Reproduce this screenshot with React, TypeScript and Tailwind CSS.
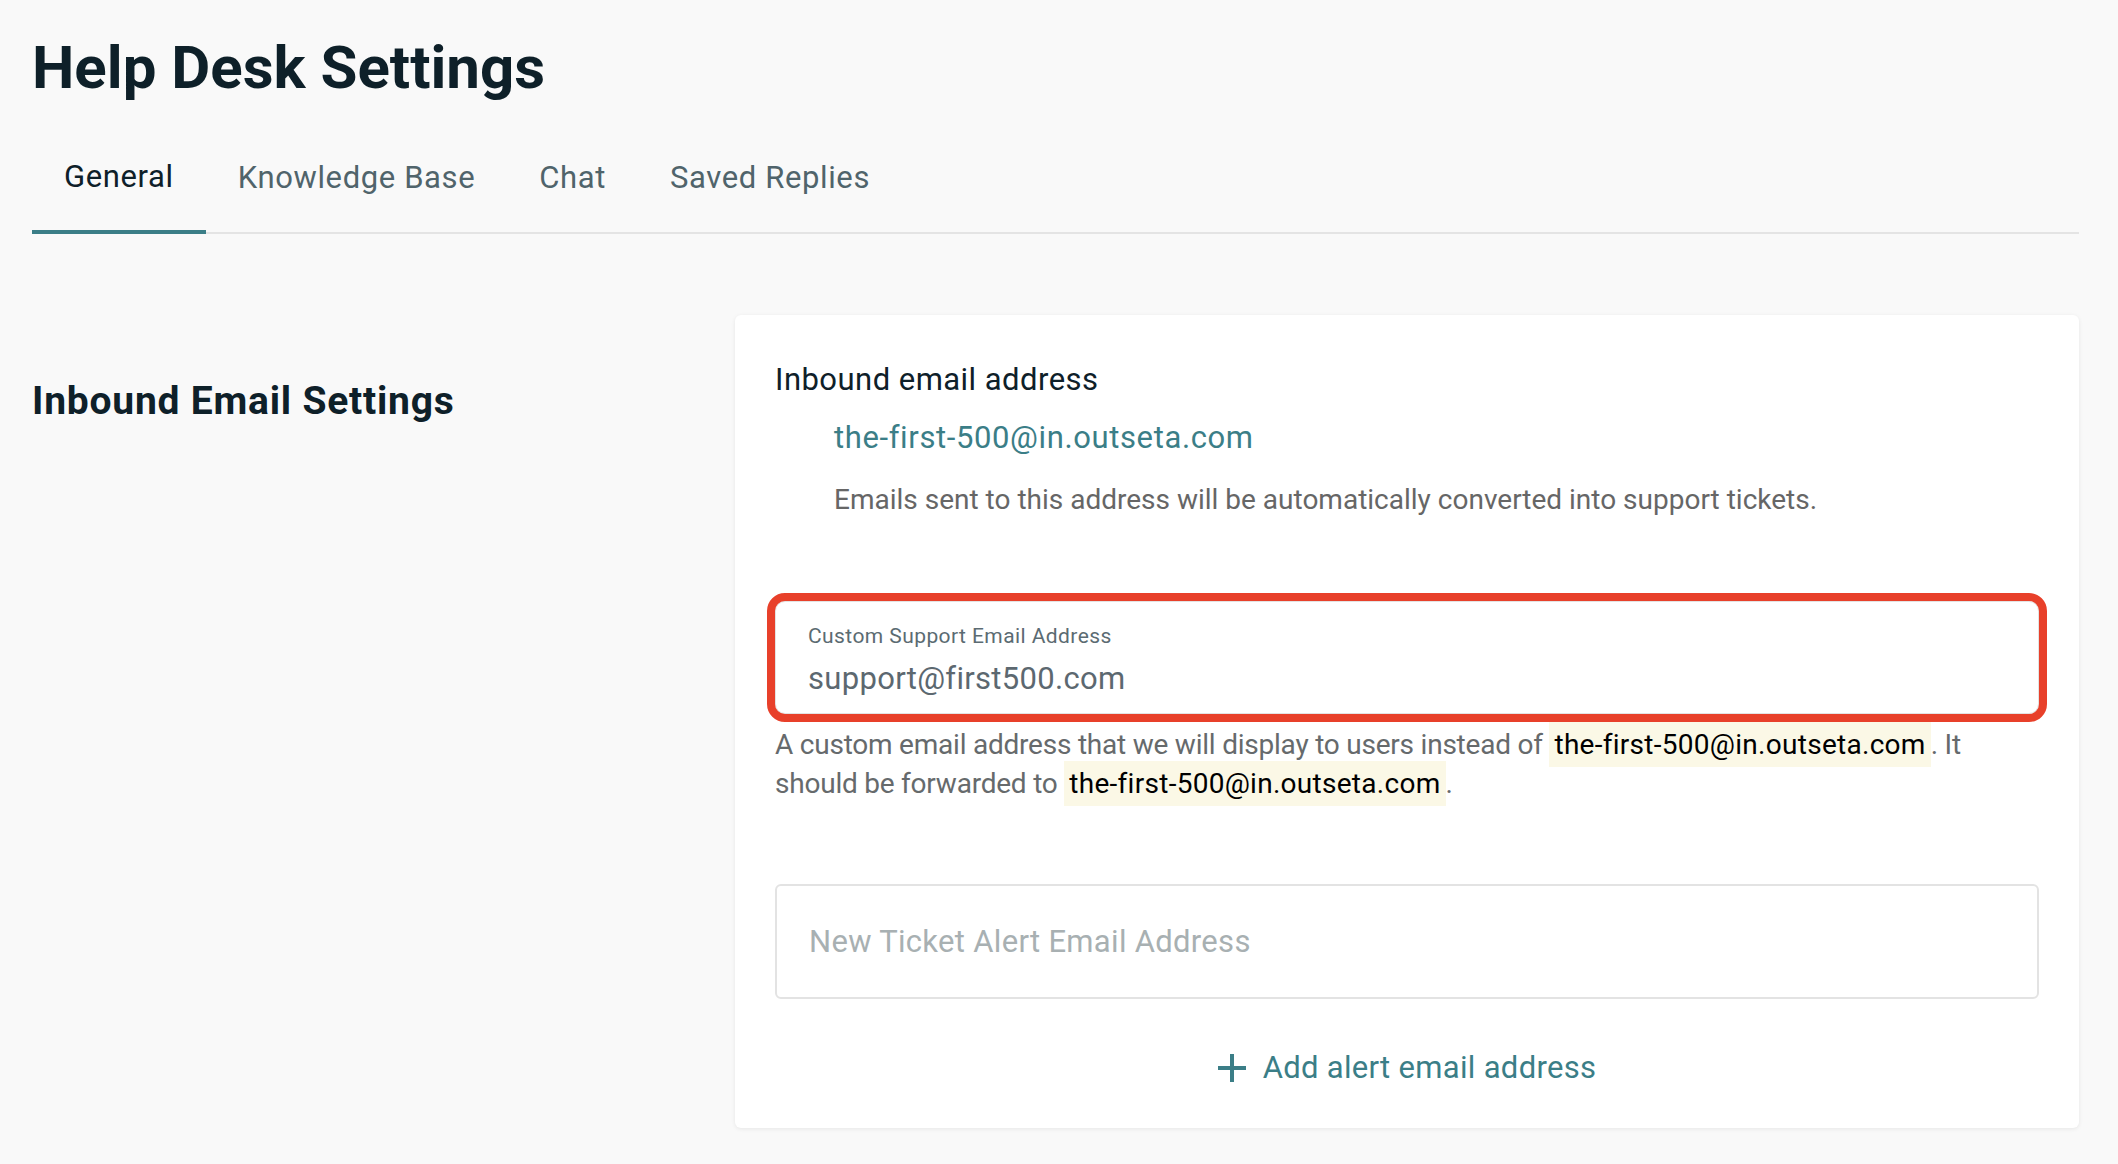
const TABS = ["General", "Knowledge Base", "Chat", "Saved Replies"];
const INBOUND = "the-first-500@in.outseta.com";

function Code({ children }: { children: React.ReactNode }) {
  return (
    <span className="bg-[#fbf8e6] px-[5px] py-[6px] tracking-[0.01em] text-black">{children}</span>
  );
}

export default function App() {
  return (
    <div className="min-h-screen bg-[#f9f9f9] pl-8 pr-[39px] pt-[38px] font-['Roboto',sans-serif] text-[#0e2029]">
      <h1 className="text-[60px] font-bold leading-[60px]">Help Desk Settings</h1>

      {/* tabs */}
      <nav className="mt-[45px] flex border-b-2 border-[#e4e4e4]">
        {TABS.map((t, i) => (
          <button
            key={t}
            className={
              i === 0
                ? "-mb-[2px] border-b-4 border-[#3b7e87] px-8 pb-[35px] pt-4 text-[31px] leading-[36px] tracking-[0.02em] text-[#0e2029]"
                : "px-8 pb-[35px] pt-4 text-[31px] leading-[36px] tracking-[0.02em] text-[#50646b]"
            }
          >
            {t}
          </button>
        ))}
      </nav>

      <div className="mt-[81px] flex">
        <div className="w-[703px] shrink-0">
          <h2 className="mt-[63px] text-[39px] font-bold leading-[46px] tracking-[0.02em]">Inbound Email Settings</h2>
        </div>

        <div className="flex-1 rounded-md bg-white px-10 pb-[42px] pt-[47px] shadow-[0_1px_4px_rgba(0,0,0,0.08)]">
          <div className="text-[31px] leading-[36px] tracking-[0.015em]">Inbound email address</div>
          <div className="pl-[59px]">
            <div className="mt-[22px] text-[31px] leading-[36px] tracking-[0.02em] text-[#3b7e87]">{INBOUND}</div>
            <p className="mt-[27px] text-[28px] leading-[34px] text-[#666]">
              Emails sent to this address will be automatically converted into support tickets.
            </p>
          </div>

          {/* custom support email (annotated) */}
          <div className="mt-[84px] h-[113px] rounded-[10px] border border-[#e3e3e3] px-8 pt-[22px] outline outline-[8px] outline-[#e8402a]">
            <div className="text-[21px] leading-[24px] tracking-[0.02em] text-[#5b6b72]">Custom Support Email Address</div>
            <div className="mt-[13px] text-[31px] leading-[36px] tracking-[0.01em] text-[#5c6870]">support@first500.com</div>
          </div>
          <p className="mt-[11px] text-[28px] leading-[39px] tracking-[-0.008em] text-[#666a6c]">
            A custom email address that we will display to users instead of <Code>{INBOUND}</Code>. It should be
            forwarded to <Code>{INBOUND}</Code>.
          </p>

          {/* alert address */}
          <div className="mt-[81px] flex h-[115px] items-center rounded-md border-2 border-[#e3e3e3] px-8">
            <span className="text-[31px] leading-[36px] tracking-[0.01em] text-[#a8b0b2]">New Ticket Alert Email Address</span>
          </div>

          <div className="mt-[51px] flex justify-center">
            <button className="flex items-center gap-[17px] text-[31px] leading-[36px] tracking-[0.01em] text-[#3b7e87]">
              <svg width="28" height="28" viewBox="0 0 28 28" fill="none" stroke="currentColor" strokeWidth="4">
                <path d="M14 0v28M0 14h28" />
              </svg>
              Add alert email address
            </button>
          </div>
        </div>
      </div>
    </div>
  );
}
